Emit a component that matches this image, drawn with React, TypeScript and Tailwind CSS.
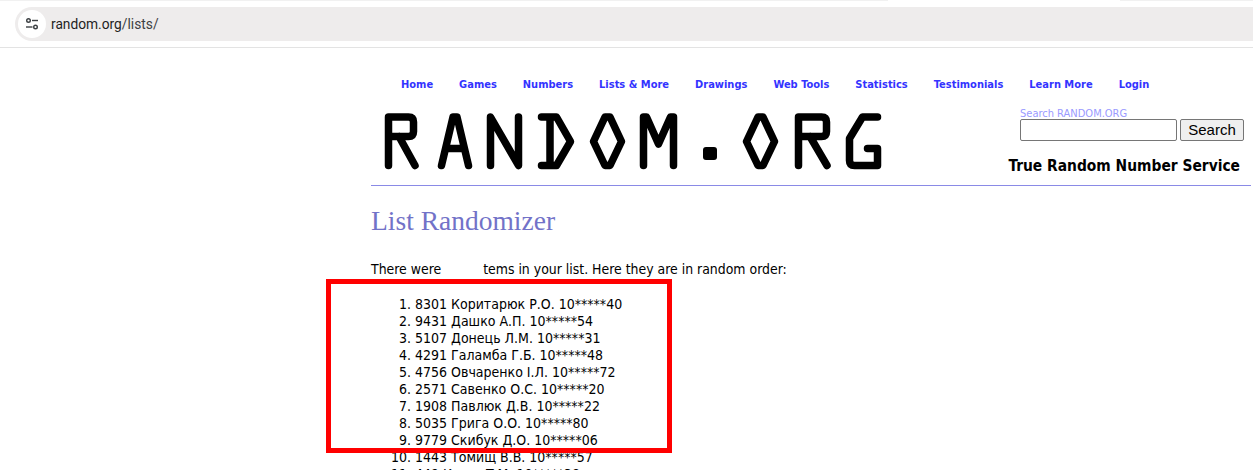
const NAV = ['Home', 'Games', 'Numbers', 'Lists & More', 'Drawings', 'Web Tools', 'Statistics', 'Testimonials', 'Learn More', 'Login'];

const ITEMS = [
  '8301 Коритарюк Р.О. 10*****40',
  '9431 Дашко А.П. 10*****54',
  '5107 Донець Л.М. 10*****31',
  '4291 Галамба Г.Б. 10*****48',
  '4756 Овчаренко І.Л. 10*****72',
  '2571 Савенко О.С. 10*****20',
  '1908 Павлюк Д.В. 10*****22',
  '5035 Грига О.О. 10*****80',
  '9779 Скибук Д.О. 10*****06',
  '1443 Томищ В.В. 10*****57',
  '449 Кузик Т.М. 10*****38',
];

function SiteInfoIcon() {
  return (
    <svg width="14" height="14" viewBox="0 0 14 14" fill="none" stroke="#3c4043" strokeWidth="1.4">
      <circle cx="3.5" cy="3.5" r="1.8" />
      <path d="M7 3.5h6" />
      <circle cx="10.5" cy="10" r="1.8" />
      <path d="M1 10h6.5" />
    </svg>
  );
}

function Logo() {
  return (
    <svg width="510" height="64" viewBox="0 0 510 64" fill="none" stroke="#000" strokeWidth="7.5" strokeLinecap="round" strokeLinejoin="round" role="img" aria-label="RANDOM.ORG">
      <path d="M8.5 55.5V7h20q5 0 5 5v9.5q0 5-5 5h-20M19 26.5l16 29" />
      <path d="M61.5 55.5L73 7h4l11.5 48.5M66 38.5h18" />
      <path d="M110.5 55.5V7L138.5 55.5V7" />
      <path d="M161.5 7h15l14 24.5-14 24h-15M170 7v48.5" />
      <path d="M225 7h5l11.5 24.5-11.5 24h-5l-11.5-24z" />
      <path d="M263.5 55.5V7h3l12 27 12-27h3v48.5" />
      <rect x="323" y="37" width="14" height="13" rx="3" fill="#000" stroke="none" />
      <path d="M378 7h5l11.5 24.5-11.5 24h-5l-11.5-24z" />
      <path d="M418.5 55.5V7h23q5 0 5 5v9.5q0 5-5 5h-23M430 26.5l17 29" />
      <path d="M497.5 7h-15l-13 21.5v22q0 5 5 5h23v-17h-10" />
    </svg>
  );
}

export default function App() {
  return (
    <div className="h-[470px] overflow-hidden bg-white text-black font-['Liberation_Sans',sans-serif]">
      <div className="flex justify-between h-[1px]">
        <div className="w-[888px] bg-[#f1f1f1]" />
        <div className="w-[133px] bg-[#f1f1f1]" />
      </div>
      <div className="h-[47px] pt-[6px] border-b border-[#e3e3e3]">
        <div className="h-[34px] ml-[15px] rounded-l-full bg-[#eeecec] flex items-center pl-[3px]">
          <div className="w-[28px] h-[28px] rounded-full bg-white flex items-center justify-center">
            <SiteInfoIcon />
          </div>
          <span className="ml-[5px] text-[13.75px] text-[#3c4043] font-['Roboto',sans-serif]">
            <span className="text-[#1f1f1f]">random.org</span>/lists/
          </span>
        </div>
      </div>

      <div className="ml-[371px] mr-[2px]">
        <nav className="h-[56px] pt-[30px] pl-[30px] flex gap-[26px] text-[11px] leading-[14px] font-bold text-[#3333ff] font-['DejaVu_Sans_Condensed','DejaVu_Sans',sans-serif]">
          {NAV.map((n) => (
            <a key={n}>{n}</a>
          ))}
        </nav>
        <div className="h-[82px] flex border-b border-[#8a8ae6]">
          <div className="pl-[9px] pt-[6px]">
            <Logo />
          </div>
          <div className="ml-auto w-[243px] flex flex-col">
            <div className="pl-[12px] text-[11px] leading-[12px] pt-[3px] translate-y-[1px] text-[#9a9aff] font-['DejaVu_Sans_Condensed','DejaVu_Sans',sans-serif]">Search RANDOM.ORG</div>
            <div className="flex gap-[3px] pl-[12px]">
              <div className="w-[157px] h-[22px] border border-[#767676] rounded-[2px]" />
              <button className="w-[64px] h-[22px] border border-[#767676] rounded-[2px] bg-[#efefef] text-[15px] leading-[20px]">Search</button>
            </div>
            <div className="mt-[16px] pr-[11px] text-[15.4px] leading-[18px] font-bold whitespace-nowrap text-right font-['DejaVu_Sans_Condensed','DejaVu_Sans',sans-serif]">True Random Number Service</div>
          </div>
        </div>
        <h1 className="mt-[19px] text-[27.5px] leading-[32px] text-[#7272c8] font-['Liberation_Serif',serif]">List Randomizer</h1>
        <p className="mt-[24px] text-[13.9px] leading-[17px] font-['DejaVu_Sans_Condensed','Noto_Sans',sans-serif]">
          There were <span className="inline-block w-[38px]" />tems in your list. Here they are in random order:
        </p>
        <ol className="mt-[18px] ml-[44px] text-[14px] leading-[17px] font-['DejaVu_Sans_Condensed','Noto_Sans',sans-serif]">
          {ITEMS.map((item, i) => (
            <li key={item} className="flex">
              <span className="w-[36px] -ml-[40px] mr-[4px] text-right">{i + 1}.</span>
              {item}
            </li>
          ))}
        </ol>
      </div>

      <div className="absolute left-[326px] top-[279px] w-[346px] h-[174px] border-[5px] border-[#ff0000]" />
    </div>
  );
}
